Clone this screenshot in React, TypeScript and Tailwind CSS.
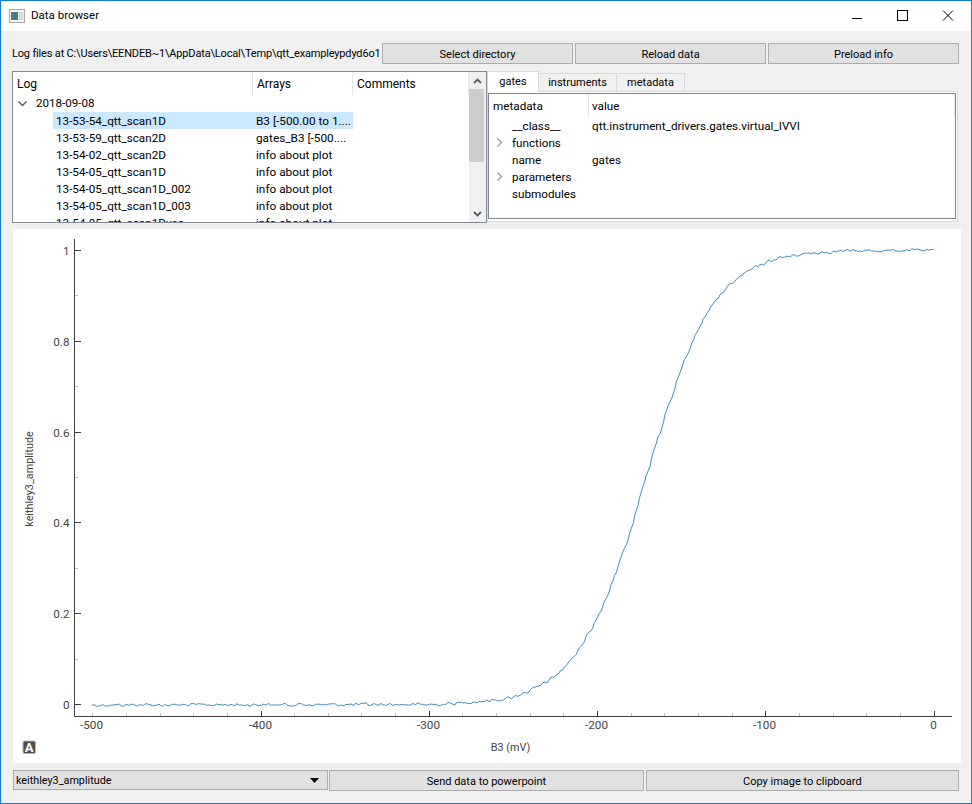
import React from 'react';

const logRows = [
  ['13-53-54_qtt_scan1D', 'B3 [-500.00 to 1....'],
  ['13-53-59_qtt_scan2D', 'gates_B3 [-500....'],
  ['13-54-02_qtt_scan2D', 'info about plot'],
  ['13-54-05_qtt_scan1D', 'info about plot'],
  ['13-54-05_qtt_scan1D_002', 'info about plot'],
  ['13-54-05_qtt_scan1D_003', 'info about plot'],
  ['13-54-05_qtt_scan1Dvec', 'info about plot'],
];

const metaRows: { name: string; value?: string; arrow?: boolean }[] = [
  { name: '__class__', value: 'qtt.instrument_drivers.gates.virtual_IVVI' },
  { name: 'functions', arrow: true },
  { name: 'name', value: 'gates' },
  { name: 'parameters', arrow: true },
  { name: 'submodules' },
];

// traced from the plot, in page pixels
const curvePoints: [number, number][] = [
  [91, 705], [440, 704.5], [506.7, 699], [533.3, 689], [556.7, 675], [573.3, 656.7], [586.7, 635],
  [596.7, 618], [606.7, 595], [621.7, 555], [632.7, 520], [640, 491.7], [653.3, 451.7], [665, 411.7],
  [673.3, 388.3], [681.7, 365], [688.3, 348.3], [698.3, 328.3], [706.7, 311.7], [723.3, 290],
  [740, 275.7], [756.7, 265.7], [778.3, 257.7], [806.7, 253.3], [840, 251], [873, 250.7], [933, 250],
];

const buildCurve = () => {
  let seed = 12345;
  const rand = () => {
    seed = (seed * 1103515245 + 12345) % 2147483648;
    return seed / 2147483648 - 0.5;
  };
  const samples: number[] = [];
  const xs: number[] = [];
  for (let x = 91; x <= 933; x += 1.68) {
    let i = 0;
    while (i < curvePoints.length - 2 && curvePoints[i + 1][0] < x) i++;
    const [x0, y0] = curvePoints[i];
    const [x1, y1] = curvePoints[i + 1];
    xs.push(x);
    samples.push(y0 + ((y1 - y0) * (x - x0)) / (x1 - x0));
  }
  const noise = samples.map(() => rand() * 3.4);
  const jitter = samples.map(() => rand() * 1.2);
  return samples
    .map((_, i) => {
      const from = Math.max(0, i - 4);
      const to = Math.min(samples.length - 1, i + 4);
      let sum = 0;
      for (let j = from; j <= to; j++) sum += samples[j];
      const n = noise[i] * 0.7 + (noise[i - 1] ?? 0) * 0.4;
      return `${i ? 'L' : 'M'}${(xs[i] + jitter[i]).toFixed(2)} ${(sum / (to - from + 1) + n).toFixed(2)}`;
    })
    .join('');
};

const Btn = ({ label, className }: { label: string; className: string }) => (
  <button className={`h-[21px] pt-[2px] bg-[#e1e1e1] border border-[#adadad] text-black text-[11px] leading-[16px] ${className}`}>{label}</button>
);

const Chevron = ({ open }: { open?: boolean }) => (
  <svg width="9" height="9" viewBox="0 0 9 9" fill="none" stroke={open ? '#5a5a5a' : '#a6a6a6'} strokeWidth="1.5">
    <path d={open ? 'M0.5 2.5 L4.5 6.5 L8.5 2.5' : 'M2.5 0.5 L6.5 4.5 L2.5 8.5'} />
  </svg>
);

const Plot = () => {
  const xMajor = [-400, -300, -200, -100, 0];
  const xLabels = [-500, -400, -300, -200, -100, 0];
  const xMinor: number[] = [];
  for (let v = -500; v <= 0; v += 20) if (v === -500 || v % 100 !== 0) xMinor.push(v);
  const px = (v: number) => Math.round(932.5 + v * 1.6825) + 0.5;
  const py = (v: number) => Math.round(704 - v * 454) + 0.5;
  return (
    <svg viewBox="12 229 948 534" className="block w-[948px] h-[534px]" fontSize="11.7" fill="#444">
      <path d="M73.5 239V716.5H951" fill="none" stroke="#404040" />
      {[0.1, 0.3, 0.5, 0.7, 0.9].map(v => (
        <path key={v} d={`M74 ${py(v)}H77`} stroke="#c0c0c0" />
      ))}
      {[0, 0.2, 0.4, 0.6, 0.8, 1].map(v => (
        <g key={v}>
          <path d={`M74 ${py(v)}H80`} stroke="#404040" />
          <text x="68.5" y={py(v) + 4.5} textAnchor="end">{v}</text>
        </g>
      ))}
      {xMinor.map(v => (
        <path key={v} d={`M${px(v)} 713V716`} stroke="#c0c0c0" />
      ))}
      {xMajor.map(v => (
        <path key={v} d={`M${px(v)} 711V716`} stroke="#404040" />
      ))}
      {xLabels.map(v => (
        <text key={v} x={px(v) - 1} y="729" textAnchor="middle">{v}</text>
      ))}
      <text x="509.5" y="751" textAnchor="middle" fontSize="10.8">B3 (mV)</text>
      <text transform="translate(32 479) rotate(-90)" textAnchor="middle" fontSize="10.8">keithley3_amplitude</text>
      <path d={buildCurve()} fill="none" stroke="#1f77b4" strokeWidth="1" strokeLinejoin="round" opacity="0.85" />
      <rect x="22" y="741" width="12.5" height="12.5" rx="1.5" fill="#505050" stroke="#b5b5b5" />
      <text x="28.2" y="751.8" textAnchor="middle" fontSize="13" fontWeight="700" fill="#ffffff">A</text>
    </svg>
  );
};

const App: React.FC = () => {
  return (
    <div
      className="w-[972px] h-[804px] bg-[#f0f0f0] border border-[#0f7fd6] overflow-hidden flex flex-col text-[12px] text-black"
      style={{ fontFamily: 'Roboto, "Open Sans", sans-serif' }}
    >
      <div className="h-[30px] bg-white flex items-center shrink-0">
        <svg width="16" height="14" viewBox="0 0 16 14" className="ml-[8px]">
          <rect x="0.5" y="0.5" width="15" height="13" fill="#f2f2f2" stroke="#a9a9a9" />
          <rect x="2" y="3" width="7" height="8" fill="#4d7d86" />
          <rect x="10" y="3" width="4" height="8" fill="#cfdcd6" />
        </svg>
        <span className="ml-[6px] text-[11.5px]">Data browser</span>
        <div className="ml-auto flex items-center">
          <svg width="12" height="12" viewBox="0 0 12 12" className="mr-[33px]" stroke="#000" fill="none">
            <path d="M1 8.5H11" />
          </svg>
          <svg width="12" height="12" viewBox="0 0 12 12" className="mr-[34px]" stroke="#000" fill="none">
            <rect x="1.5" y="0.5" width="10" height="10" />
          </svg>
          <svg width="12" height="12" viewBox="0 0 12 12" className="mr-[17px]" stroke="#000" fill="none">
            <path d="M1 0.5L11 10.5M11 0.5L1 10.5" />
          </svg>
        </div>
      </div>

      <div className="flex-1 flex flex-col pl-[11px] pr-[12px] pt-[12px]">
        <div className="h-[21px] flex items-center shrink-0">
          <span className="w-[370px] shrink-0 pt-[2px] whitespace-nowrap text-[11px] tracking-[-0.17px]">Log files at C:\Users\EENDEB~1\AppData\Local\Temp\qtt_exampleypdyd6o1</span>
          <div className="flex gap-[2px]">
            <Btn label="Select directory" className="w-[191px]" />
            <Btn label="Reload data" className="w-[191px]" />
            <Btn label="Preload info" className="w-[191px]" />
          </div>
        </div>

        <div className="h-[152px] mt-[7px] flex shrink-0">
          <div className="w-[475px] h-full border border-[#828790] bg-white flex overflow-hidden shrink-0">
            <div className="flex-1 min-w-0 overflow-hidden">
              <div className="h-[23px] flex items-center">
                <div className="w-[240px] h-full flex items-center pl-[4px] border-r border-[#e5e5e5]">Log</div>
                <div className="w-[100px] h-full flex items-center pl-[4px] border-r border-[#e5e5e5]">Arrays</div>
                <div className="flex-1 h-full flex items-center pl-[4px] border-r border-[#e5e5e5]">Comments</div>
              </div>
              <div className="h-[17px] flex items-center pl-[5px] gap-[9px]">
                <Chevron open />
                <span className="text-[11.6px]">2018-09-08</span>
              </div>
              {logRows.map(([name, arrays], i) => (
                <div key={name} className="h-[17px] flex items-center">
                  <div className={`ml-[40px] w-[300px] h-full flex items-center whitespace-nowrap ${i === 0 ? 'bg-[#cce8ff]' : ''}`}>
                    <span className="w-[200px] pl-[3px] pt-[2px] text-[11.7px]">{name}</span>
                    <span className="pl-[3px] pt-[2px] text-[11.8px]">{arrays}</span>
                  </div>
                </div>
              ))}
            </div>
            <div className="w-[17px] h-full bg-[#f0f0f0] flex flex-col shrink-0">
              <div className="h-[17px] flex items-center justify-center">
                <svg width="9" height="6" viewBox="0 0 9 6" fill="none" stroke="#5a5a5a" strokeWidth="1.8"><path d="M1 5L4.5 1.5L8 5" /></svg>
              </div>
              <div className="h-[73px] w-[15px] bg-[#cdcdcd]" />
              <div className="flex-1" />
              <div className="h-[17px] flex items-center justify-center">
                <svg width="9" height="6" viewBox="0 0 9 6" fill="none" stroke="#5a5a5a" strokeWidth="1.8"><path d="M1 1L4.5 4.5L8 1" /></svg>
              </div>
            </div>
          </div>

          <div className="w-[471px] flex flex-col">
            <div className="h-[21px] flex items-end shrink-0 relative z-10 -mb-[1px] text-[11px]">
              <div className="w-[52px] h-[21px] pt-[1px] bg-white border border-b-0 border-[#d9d9d9] flex items-center justify-center">gates</div>
              <div className="w-[78px] h-[19px] pt-[2px] bg-[#f0f0f0] border border-l-0 border-[#d9d9d9] flex items-center justify-center">instruments</div>
              <div className="w-[68px] h-[19px] pt-[2px] bg-[#f0f0f0] border border-l-0 border-[#d9d9d9] flex items-center justify-center">metadata</div>
            </div>
            <div className="h-[131px] border border-[#d9d9d9] bg-white pt-[1px] pb-[2px] pr-[1px]">
              <div className="h-full border border-[#828790] bg-white overflow-hidden text-[11.7px]">
                <div className="h-[23px] flex">
                  <div className="w-[100px] h-full flex items-center pl-[4px] pt-[2px] border-r border-[#e5e5e5]">metadata</div>
                  <div className="flex-1 h-full flex items-center pl-[3px] pt-[2px] border-r border-[#e5e5e5]">value</div>
                </div>
                {metaRows.map(row => (
                  <div key={row.name} className="h-[17px] flex items-center">
                    <div className="w-[23px] pl-[6px] flex items-center">{row.arrow && <Chevron />}</div>
                    <span className="w-[77px] pt-[2px]">{row.name}</span>
                    <span className="pl-[3px] pt-[2px]">{row.value}</span>
                  </div>
                ))}
              </div>
            </div>
          </div>
        </div>

        <div className="mt-[6px] ml-[1px] w-[948px] h-[534px] bg-white shrink-0">
          <Plot />
        </div>

        <div className="h-[21px] mt-[7px] flex ml-[1px] gap-[1px] shrink-0">
          <div className="w-[316px] h-[20px] bg-[#e1e1e1] border border-[#adadad] flex items-center pl-[2px] pr-[8px] text-[10.8px]">
            <span className="pt-[2px]">keithley3_amplitude</span>
            <svg width="9" height="5" viewBox="0 0 9 5" className="ml-auto"><path d="M0 0H9L4.5 5Z" fill="#000" /></svg>
          </div>
          <Btn label="Send data to powerpoint" className="w-[315px]" />
          <Btn label="Copy image to clipboard" className="w-[314px] ml-[1px]" />
        </div>
      </div>
    </div>
  );
};

export default App;
